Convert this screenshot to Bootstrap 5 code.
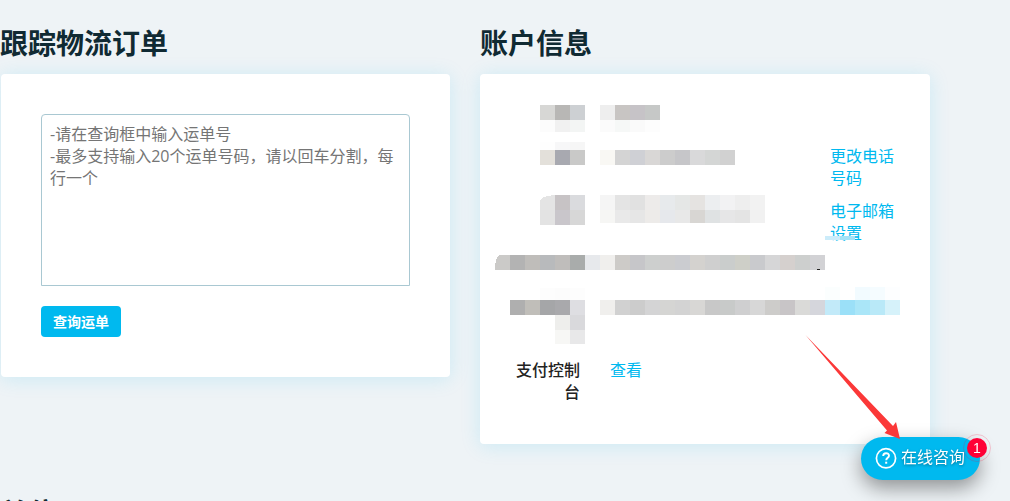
<!DOCTYPE html>
<html lang="zh-CN">
<head>
<meta charset="utf-8">
<meta name="viewport" content="width=device-width, initial-scale=1">
<title>账户</title>
<link href="https://cdn.jsdelivr.net/npm/bootstrap@5.3.0/dist/css/bootstrap.min.css" rel="stylesheet">
<style>
body{background:#eef3f6;color:#333;font-family:"Open Sans","Noto Sans CJK SC",sans-serif;font-size:16px;line-height:22px;height:100vh;overflow:hidden}
main{padding:26px 80px 0 0}
.panes{gap:30px}
h2{font-size:28px;line-height:34px;font-weight:700;color:#102a33;margin:0 0 14px}
.pane{background:#fff;border:0;border-radius:4px;box-shadow:0 2px 20px rgba(0,185,239,.15)}
.track{padding:40px;margin-left:1px}
.track textarea{height:172px;margin-bottom:20px;padding:8px;border:1px solid #a9c8d2;border-radius:4px 4px 0 0;color:#757575;font-size:16px;line-height:22px;resize:none}
.track textarea::placeholder{color:#757575}
.btn-query{background:#00b9ef;color:#fff;font-size:14px;line-height:21px;font-weight:700;padding:5px 12px;border:0;border-radius:4px}
.info{padding:27px 30px 41px}
.facts{display:grid;grid-template-columns:70px 1fr 70px;grid-template-rows:44px 55px 51px 45px 63px auto;column-gap:30px;margin:0}
.facts dt{font-weight:500;text-align:right;color:#222;grid-column:1}
.facts dd{margin:0}
.facts .act{grid-column:3}
.facts a{color:#00b9ef;text-decoration:none}
.redact{pointer-events:none}
.more{margin-top:52px}
.chat{right:30px;bottom:21px;background:#00b9ef;color:#fff;height:43px;padding:0 15px 4px 14px;border:0;border-radius:22px;gap:4px;font-size:16px;box-shadow:0 8px 20px rgba(0,0,0,.4);text-shadow:0 1px 3px rgba(0,0,0,.4)}
.count{right:-7px;top:1px;width:20px;height:20px;border-radius:50%;background:#ff0036;font:14px/20px "Liberation Sans",sans-serif;text-shadow:none}
.count::after{content:"";position:absolute;inset:-4px;border:1px solid rgba(255,0,54,.2);border-radius:50%}
.arrow{right:108px;bottom:60px;pointer-events:none}
</style>
</head>
<body>
<main>
<div class="panes d-flex align-items-start">
  <section class="w-50"><h2>跟踪物流订单</h2>
    <form class="pane track">
      <textarea class="d-block w-100" aria-label="运单号" placeholder="-请在查询框中输入运单号&#10;-最多支持输入20个运单号码，请以回车分割，每行一个"></textarea>
      <button type="button" class="btn-query d-block">查询运单</button>
    </form>
  </section>
  <section class="w-50"><h2>账户信息</h2>
    <div class="pane info position-relative">
      <dl class="facts">
        <dt></dt><dd></dd><dd class="act"></dd>
        <dt></dt><dd></dd><dd class="act"><a href="#">更改电话号码</a></dd>
        <dt></dt><dd></dd><dd class="act"><a href="#">电子邮箱设置</a></dd>
        <dt></dt><dd></dd><dd class="act"></dd>
        <dt></dt><dd></dd><dd class="act"></dd>
        <dt>支付控制台</dt><dd><a href="#">查看</a></dd>
      </dl>
      <svg class="redact position-absolute top-0 start-0" width="450" height="300" shape-rendering="crispEdges" aria-hidden="true"></svg>
    </div>
  </section>
</div>
<h2 class="more">单位</h2>
</main>

<button type="button" class="chat position-fixed d-flex align-items-center">
  <svg width="22" height="24" viewBox="0 0 22 24" fill="none" stroke="#fff" stroke-width="1.7"><circle cx="11" cy="13.300" r="9.600"/><path d="M8.200 11c0-3.700 5.800-3.700 5.800-.3 0 2-2.800 2.200-2.800 4.600" stroke-width="1.9"/><path d="M11.200 16.700v2" stroke-width="2"/></svg>
  <span>在线咨询</span>
  <span class="count position-absolute">1</span>
</button>
<svg class="arrow position-fixed" width="97" height="106" viewBox="0 0 97 106" aria-hidden="true"><path d="M0.500 0 88 91 91 87 95 104 79.500 98 82 95.500Z" fill="#fb3838"/></svg>

<script>
// Mosaic over private values: [x, y, height, colours of 15px tiles]
const tiles = [
  [60, 31, 15, 'd7d7d5 b8b7b5 cdd0d3'], [60, 46, 12, 'fcfcfc f1f1f1 f3f5f4'],
  [120, 31, 15, 'eeeeee c8c5c3 c6c3c7 c6c8c7'], [120, 46, 12, 'fbfbfb f6f8f7 fafafa fdfdfd'],
  [60, 68, 8, 'fefefe f7f7f8 f6f6f6'], [60, 76, 15, 'e3e0da a8a9b0 c9c9c8'],
  [120, 76, 15, 'f9f8f4 d4d4d4 cfd0d5 d9d7d6 cccccc c6c6c9 d9d9da d4d6d5 d1d1d1'],
  [60, 121, 15, 'e4e4e4 c7c3c5 dadbde'], [60, 136, 15, 'e3e3e3 c9c6cb d7d7d7'],
  [120, 121, 15, 'f5f5f5 e4e4e4 e1e1e1 edebea e7eaec e5e7e6 e5e3e1 eceef0 f2f2f3 eeeeee f2f2f2'],
  [120, 136, 13, 'f6f6f4 e9e9e9 e6e6e6 edebe9 e6e8ec e8e8e8 d8d6d3 dfe2e3 e6e6e7 e4e4e4 f1f1f1'],
  [345, 162, 4, 'ccecfa a2e2f7'],
  [15, 181, 15, 'cbcac8 b3b3b3 bfbdba b8babc bfbdbb a9acab e7e9ec f0efed cdcbc8 c6c6c9 cdcfce cdcdcd cbccd0 d4d2cf cfcfcf cacdcc cecfc8 c9cacd d6d6d7 d5d0ce cdcfce d2d2d5'],
  [60, 214, 12, 'fdfdfd fcfcfc fdfdfd'],
  [30, 226, 15, 'afafaf c0beb9 a5a6a8 a9a9ac dedee2'],
  [75, 241, 15, 'eeeeec d9d9dc'], [75, 256, 14, 'f7f7f5 e8e8e9'],
  [120, 226, 15, 'f0efed d1d1d1 cccccc d4d4d5 d5d5d3 d3d3d3 d8d7d5 c8c8c8 c8cac9 cfcfd0 d7d7d7 cdccca c8c5c7 dadad8 d5d6dc c2eaf9 9be0f8 aae6f8 b9e9f8 d6f2fa'],
  [345, 213, 13, 'fbfefe ffffff f2fbff f5fcff fdfeff']
];
document.querySelector('.redact').innerHTML = tiles.map(([x, y, h, c]) =>
  c.split(' ').map((f, i) => `<rect x="${x + i * 15}" y="${y}" width="15" height="${h}" fill="#${f}"/>`).join('')
).join('') + '<path d="M15 181h4l-3 5-1 6ZM60 121h14l-11 2-3 3Z" fill="#fff"/><path d="M337 195h3" stroke="#222"/>';
</script>
<script src="https://cdn.jsdelivr.net/npm/bootstrap@5.3.0/dist/js/bootstrap.bundle.min.js"></script>
</body>
</html>
